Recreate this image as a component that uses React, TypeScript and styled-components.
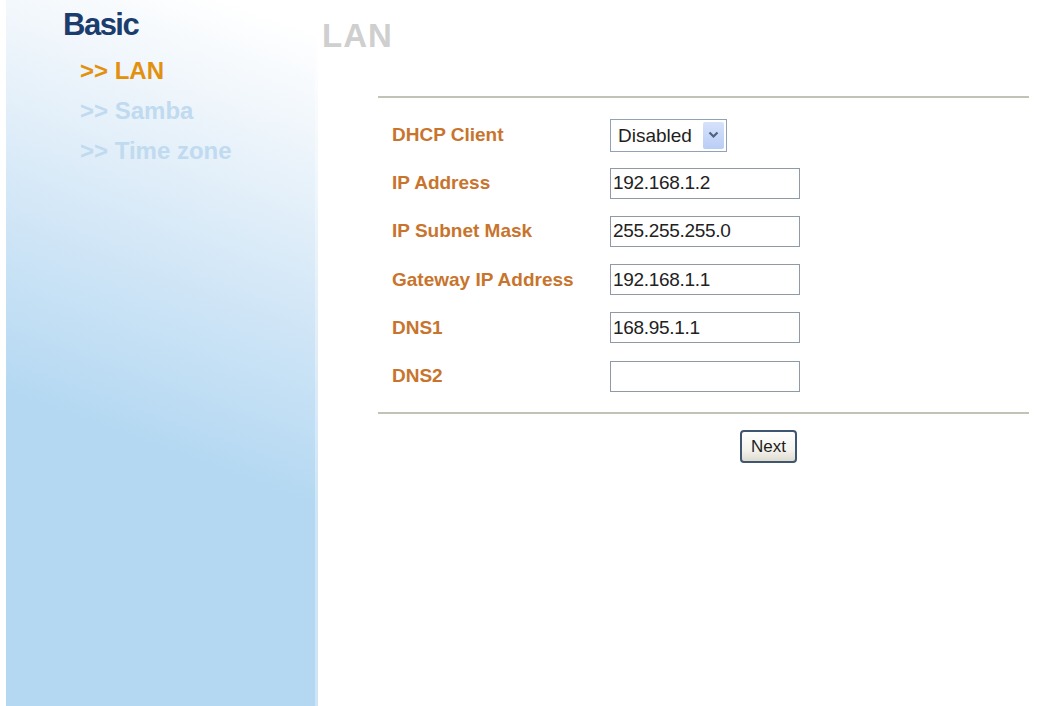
import React from 'react';
import styled, { createGlobalStyle } from 'styled-components';

const GlobalStyle = createGlobalStyle`
  html, body {
    margin: 0;
    padding: 0;
    background: #ffffff;
    font-family: "Liberation Sans", Arial, sans-serif;
  }
`;

interface NavItem {
  label: string;
  active?: boolean;
}

interface Field {
  label: string;
  value: string;
}

const navItems: NavItem[] = [
  { label: 'LAN', active: true },
  { label: 'Samba' },
  { label: 'Time zone' },
];

const fields: Field[] = [
  { label: 'IP Address', value: '192.168.1.2' },
  { label: 'IP Subnet Mask', value: '255.255.255.0' },
  { label: 'Gateway IP Address', value: '192.168.1.1' },
  { label: 'DNS1', value: '168.95.1.1' },
  { label: 'DNS2', value: '' },
];

const App: React.FC = () => {
  return (
    <>
      <GlobalStyle />
      <Page>
        <Sidebar>
          <SectionTitle>Basic</SectionTitle>
          <NavList>
            {navItems.map((item) => (
              <NavLink key={item.label} $active={item.active}>
                &gt;&gt; {item.label}
              </NavLink>
            ))}
          </NavList>
        </Sidebar>
        <Main>
          <PageTitle>LAN</PageTitle>
          <FormArea>
            <Rule />
            <FieldGrid>
              <Label>DHCP Client</Label>
              <SelectBox>
                <Select defaultValue="disabled">
                  <option value="disabled">Disabled</option>
                  <option value="enabled">Enabled</option>
                </Select>
                <DropButton>
                  <svg width="11" height="8" viewBox="0 0 11 8">
                    <path d="M1.5 1.5 L5.5 5.5 L9.5 1.5" fill="none" stroke="#4d6185" strokeWidth="2.2" />
                  </svg>
                </DropButton>
              </SelectBox>
              {fields.map((f) => (
                <React.Fragment key={f.label}>
                  <Label>{f.label}</Label>
                  <TextInput type="text" defaultValue={f.value} />
                </React.Fragment>
              ))}
            </FieldGrid>
            <Rule />
            <ButtonRow>
              <NextButton type="button">Next</NextButton>
            </ButtonRow>
          </FormArea>
        </Main>
      </Page>
    </>
  );
};

const Page = styled.div`
  display: flex;
  width: 1039px;
  height: 706px;
  overflow: hidden;
`;

const Sidebar = styled.div`
  flex: 0 0 312px;
  margin-left: 6px;
  height: 706px;
  box-sizing: border-box;
  padding-top: 9px;
  background: linear-gradient(200deg, #ffffff 4%, #eef5fb 18%, #d3e7f7 38%, #b4d8f2 62%, #b4d8f2 100%);
  box-shadow: inset -3px 0 0 rgba(255, 255, 255, 0.35);
`;

const SectionTitle = styled.div`
  padding-left: 57px;
  font-size: 31px;
  line-height: 31px;
  font-weight: bold;
  letter-spacing: -1.5px;
  color: #1b3d6d;
`;

const NavList = styled.div`
  margin-top: 11px;
  padding-left: 74px;
`;

const NavLink = styled.div<{ $active?: boolean }>`
  font-size: 24px;
  line-height: 40px;
  font-weight: bold;
  white-space: nowrap;
  color: ${(p) => (p.$active ? '#e2900e' : '#c0daf0')};
`;

const Main = styled.div`
  flex: 1;
  padding-top: 19px;
`;

const PageTitle = styled.div`
  padding-left: 4px;
  font-size: 33px;
  line-height: 33px;
  font-weight: bold;
  letter-spacing: 1px;
  color: #cfcfcf;
`;

const FormArea = styled.div`
  margin: 44px 10px 0 60px;
`;

const Rule = styled.div`
  height: 2px;
  background: #c2c2b6;
`;

const FieldGrid = styled.div`
  display: grid;
  grid-template-columns: 232px 1fr;
  grid-auto-rows: 48.2px;
  align-items: center;
  padding: 13px 0 12px 0;
`;

const Label = styled.div`
  padding-left: 14px;
  font-size: 19px;
  font-weight: bold;
  color: #c8742d;
  white-space: nowrap;
`;

const SelectBox = styled.div`
  position: relative;
  width: 117px;
  height: 33px;
  box-sizing: border-box;
  border: 1px solid #8fa2b8;
  background: #fff;
`;

const Select = styled.select`
  appearance: none;
  width: 100%;
  height: 100%;
  border: none;
  outline: none;
  background: transparent;
  padding: 0 0 0 7px;
  font-family: "Liberation Sans", Arial, sans-serif;
  font-size: 19px;
  color: #1e1e1e;
`;

const DropButton = styled.span`
  position: absolute;
  top: 2px;
  right: 2px;
  width: 21px;
  height: 27px;
  display: flex;
  align-items: center;
  justify-content: center;
  background: linear-gradient(180deg, #d6e2fb 0%, #b9cdf5 100%);
  border-radius: 2px;
  pointer-events: none;
`;

const TextInput = styled.input`
  width: 190px;
  height: 31px;
  box-sizing: border-box;
  border: 1px solid #8e9aa6;
  padding: 0 0 0 2px;
  font-family: "Liberation Sans", Arial, sans-serif;
  font-size: 19px;
  letter-spacing: -0.3px;
  color: #222;
  outline: none;
`;

const ButtonRow = styled.div`
  display: flex;
  padding: 16px 0 0 362px;
`;

const NextButton = styled.button`
  width: 57px;
  height: 33px;
  box-sizing: border-box;
  border: 2px solid #3f5670;
  border-radius: 4px;
  background: linear-gradient(180deg, #ffffff 0%, #f4f3ee 60%, #dedbd0 100%);
  font-family: "Liberation Sans", Arial, sans-serif;
  font-size: 17px;
  color: #1e1e1e;
  padding: 0;
`;

export default App;
